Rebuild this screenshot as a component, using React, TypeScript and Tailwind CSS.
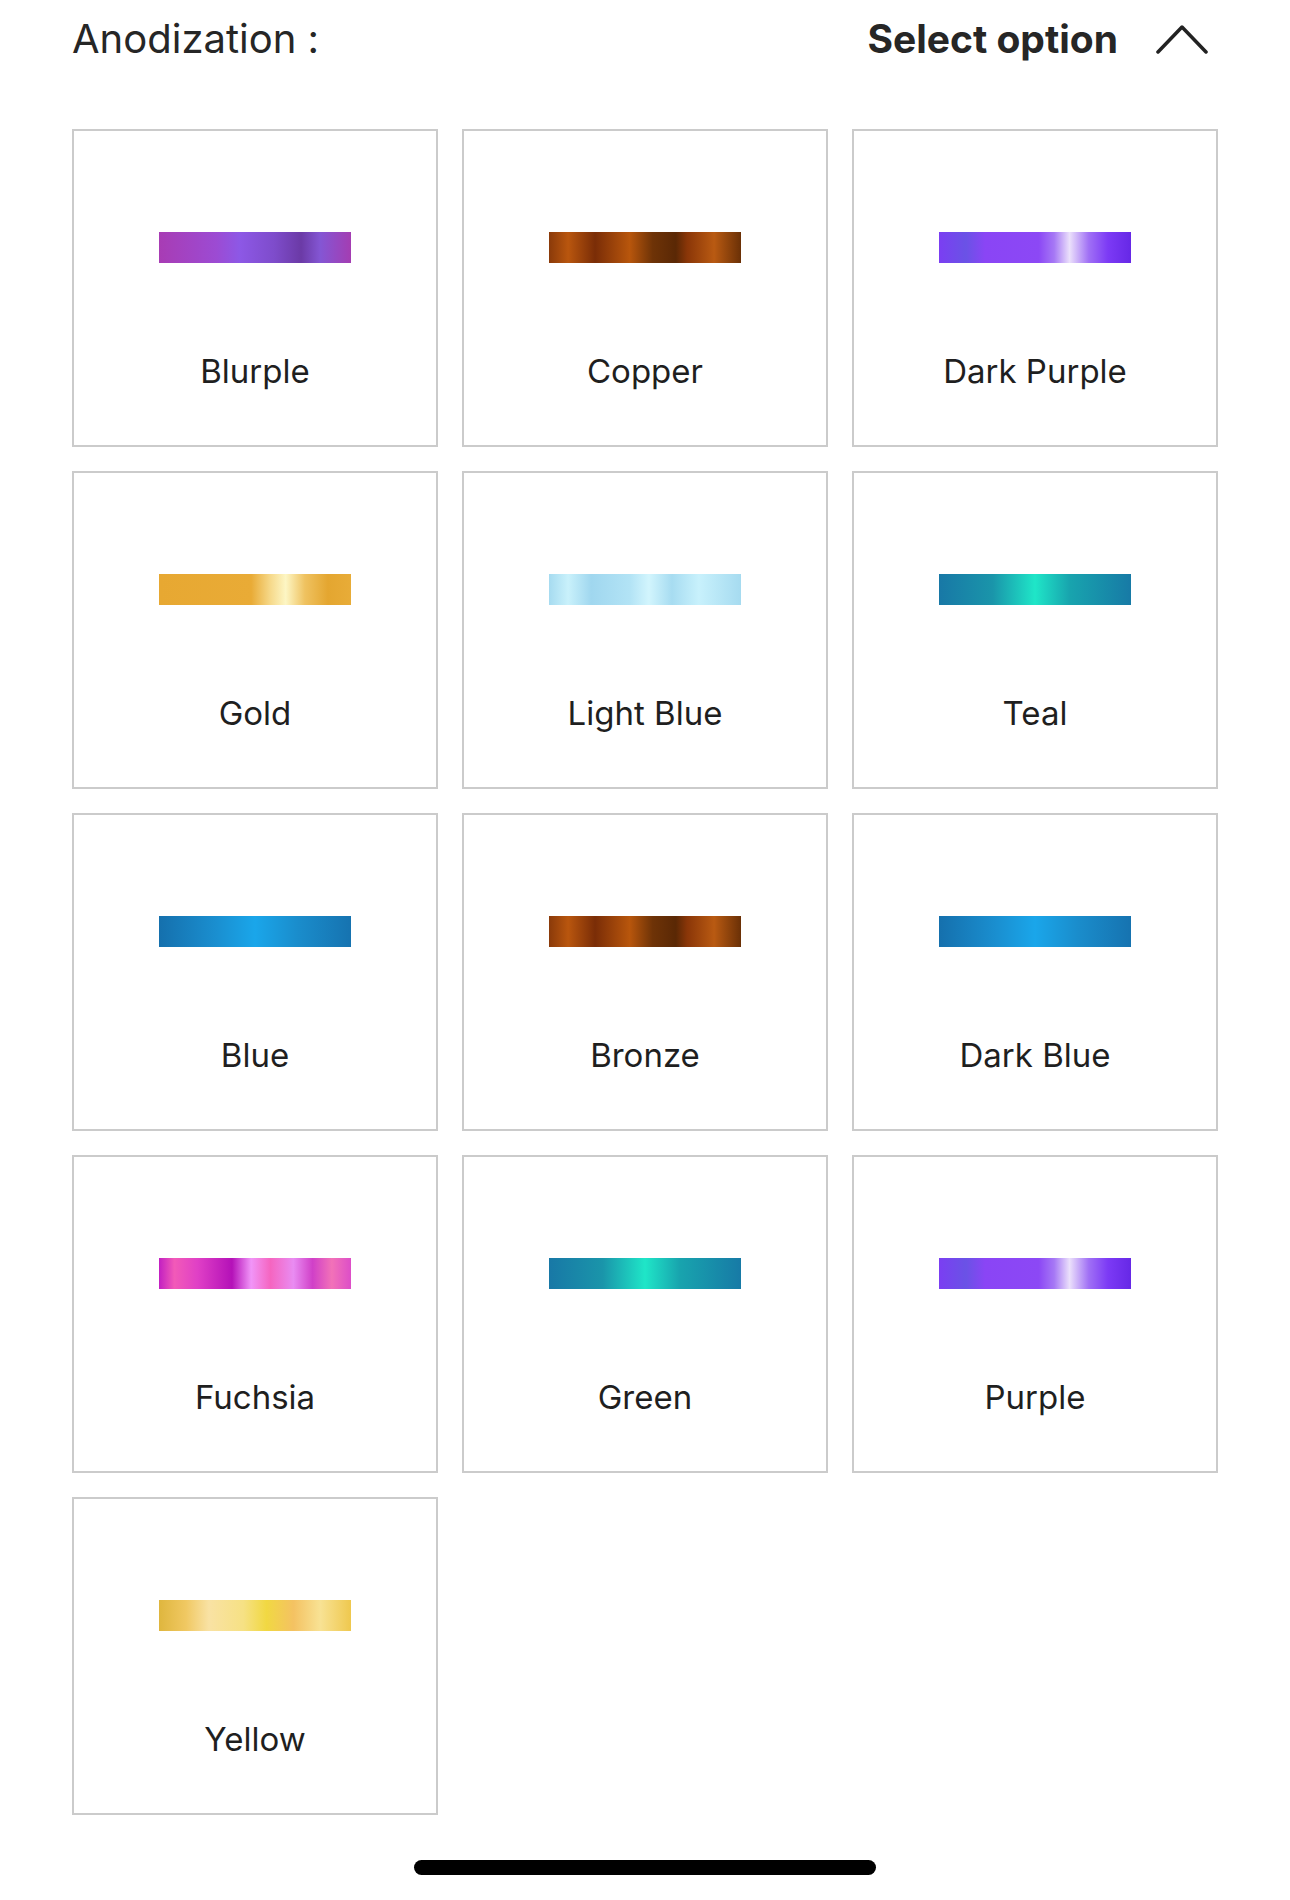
type TSwatch = {
  name: string,
  gradient: string
}

const PURPLE = 'bg-[linear-gradient(90deg,#7b3ef2_0%,#6a52e6_14%,#8a45f5_24%,#8c48f5_52%,#a678f5_60%,#ebe0fb_68%,#a070f5_78%,#7c3af5_88%,#6628e6_100%)]'
const COPPER = 'bg-[linear-gradient(90deg,#8a3a0a_0%,#b9560e_10%,#7a2d07_24%,#b8560c_42%,#6e3307_54%,#5a2805_66%,#8a3608_72%,#b95a12_86%,#6a3006_100%)]'
const TEAL = 'bg-[linear-gradient(90deg,#1878a6_0%,#1a95aa_28%,#1fe6c8_50%,#18a4ae_68%,#177aa6_100%)]'
const BLUE = 'bg-[linear-gradient(90deg,#1570ad_0%,#1a8fd0_30%,#1aa6ea_50%,#1a8dcc_72%,#1673b0_100%)]'

const SWATCHES: TSwatch[] = [
  { name: 'Blurple', gradient: 'bg-[linear-gradient(90deg,#a83cb4_0%,#9c4bd3_30%,#8d58e6_42%,#7e4ccb_60%,#6b3aa6_74%,#8456d4_84%,#a43db2_100%)]' },
  { name: 'Copper', gradient: COPPER },
  { name: 'Dark Purple', gradient: PURPLE },
  { name: 'Gold', gradient: 'bg-[linear-gradient(90deg,#e7a832_0%,#e9ab36_48%,#f6d98a_58%,#fdf6c4_66%,#efc260_76%,#e4a630_88%,#e8ac38_100%)]' },
  { name: 'Light Blue', gradient: 'bg-[linear-gradient(90deg,#a6dbf0_0%,#c9f1fb_10%,#a0d7ef_22%,#b2e3f5_42%,#d2f5fd_52%,#a7dcf1_64%,#c8f1fc_78%,#a6dbf0_100%)]' },
  { name: 'Teal', gradient: TEAL },
  { name: 'Blue', gradient: BLUE },
  { name: 'Bronze', gradient: COPPER },
  { name: 'Dark Blue', gradient: BLUE },
  { name: 'Fuchsia', gradient: 'bg-[linear-gradient(90deg,#c21fc2_0%,#f25ab8_8%,#e040c6_20%,#b411b8_38%,#f195f8_48%,#f565c0_58%,#e98cf2_70%,#d040c8_80%,#f272b8_90%,#dd4ec8_100%)]' },
  { name: 'Green', gradient: TEAL },
  { name: 'Purple', gradient: PURPLE },
  { name: 'Yellow', gradient: 'bg-[linear-gradient(90deg,#dfb63e_0%,#f0c862_14%,#f9e2a4_26%,#f6e184_44%,#f1d842_56%,#f4c262_70%,#f8e294_84%,#efc84e_100%)]' }
]

const SwatchCard = ({ data }: { data: TSwatch }) => {
  return (
    <div className="h-[318px] border-2 border-[#cbcbcb] bg-white flex flex-col items-center pt-[101px]">
      <div className={`w-[192px] h-[31px] ${data.gradient}`} />
      <p className="mt-[88px] text-[33px] leading-[40px] text-[#1f1f1f]">{data.name}</p>
    </div>
  )
}

const App = () => {
  return (
    <div className="w-[1290px] h-[1900px] bg-white font-['Inter','Liberation_Sans',sans-serif] px-[72px] pt-[16px]">
      <div className="flex flex-row justify-between items-center h-[46px]">
        <span className="text-[40px] leading-[46px] text-[#262626]">Anodization :</span>

        <div className="flex flex-row items-center gap-[38px] pr-[10px]">
          <span className="text-[39px] leading-[46px] font-bold text-[#262626]">Select option</span>
          <svg width="52" height="32" viewBox="0 0 52 32" fill="none">
            <polyline
              points="2,29 26,4 50,29"
              stroke="#222"
              strokeWidth="3.5"
              strokeLinecap="round"
              strokeLinejoin="round"
            />
          </svg>
        </div>
      </div>

      <div className="grid grid-cols-3 gap-[24px] mt-[67px]">
        {SWATCHES.map((s) => (
          <SwatchCard data={s} key={s.name} />
        ))}
      </div>

      <div className="flex justify-center mt-[45px]">
        <div className="w-[462px] h-[15px] rounded-full bg-black" />
      </div>
    </div>
  )
}

export default App
